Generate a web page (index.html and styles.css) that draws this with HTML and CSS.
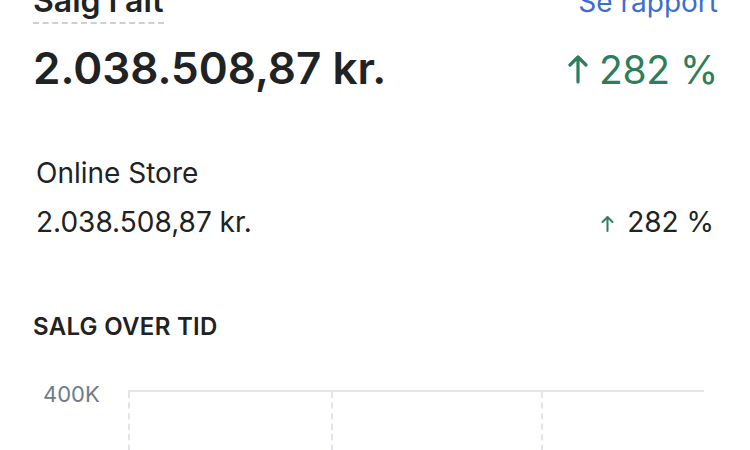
FILE: index.html
```html
<!DOCTYPE html>
<html lang="da">
<head>
    <meta charset="UTF-8">
    <meta name="viewport" content="width=device-width, initial-scale=1.0">
    <title>Salg i alt</title>
    <link rel="stylesheet" href="styles.css">
</head>
<body>
    <div class="page">
        <div class="summary">
            <div class="summary-head">
                <span class="summary-title">Salg i alt</span>
                <a class="report-link" href="#">Se rapport</a>
            </div>
            <div class="summary-values">
                <span class="total">2.038.508,87 kr.</span>
                <span class="change-big">
                    <svg class="arrow" viewBox="0 0 20 30" width="20" height="30">
                        <path d="M10 28V3M2 11l8-8 8 8" fill="none" stroke="currentColor" stroke-width="3.2" stroke-linecap="round" stroke-linejoin="round"/>
                    </svg>282 %</span>
            </div>
        </div>

        <div class="channel">
            <div class="channel-name">Online Store</div>
            <div class="channel-row">
                <span>2.038.508,87 kr.</span>
                <span class="channel-change">
                    <svg class="arrow-small" viewBox="0 0 13 17" width="13" height="17">
                        <path d="M6.5 16V2M1.5 7l5-5 5 5" fill="none" stroke="currentColor" stroke-width="2" stroke-linecap="round" stroke-linejoin="round"/>
                    </svg>282 %</span>
            </div>
        </div>

        <div class="chart-section">
            <h3 class="chart-title">SALG OVER TID</h3>
            <div class="chart">
                <div class="y-label">400K</div>
                <div class="plot">
                    <div class="plot-col"></div>
                    <div class="plot-col"></div>
                    <div class="plot-col"></div>
                </div>
            </div>
        </div>
    </div>
</body>
</html>
```

FILE: styles.css
```css
:root {
    --text-color: #202223;
    --muted-color: #6d7b8a;
    --link-color: #3b6ed3;
    --green: #2e7d5b;
    --grid-color: #e1e4e8;
}

body {
    margin: 0;
    padding: 0;
    font-family: Inter, "Noto Sans", sans-serif;
    color: var(--text-color);
    background: #fff;
    overflow: hidden;
}

.page {
    padding: 0 32px 0 33px;
    margin-top: -19px;
}

.summary-head {
    display: flex;
    justify-content: space-between;
    align-items: baseline;
    line-height: 40px;
}

.summary-title {
    font-size: 32px;
    font-weight: 600;
    padding-bottom: 1px;
    border-bottom: 2px dashed #c9d0d8;
}

.report-link {
    font-size: 28px;
    color: var(--link-color);
    text-decoration: none;
}

.summary-values {
    display: flex;
    justify-content: space-between;
    align-items: baseline;
    margin-top: 18px;
    line-height: 52px;
    height: 52px;
}

.total {
    font-size: 44px;
    font-weight: 600;
}

.change-big {
    font-size: 39px;
    letter-spacing: -0.4px;
    color: var(--green);
}

.arrow {
    vertical-align: baseline;
    margin-right: 11px;
}

.channel {
    margin-top: 62px;
    padding: 0 4px 0 3px;
    font-size: 28px;
    line-height: 34px;
}

.channel-row {
    display: flex;
    justify-content: space-between;
    align-items: baseline;
    margin-top: 15px;
}

.arrow-small {
    color: var(--green);
    vertical-align: baseline;
    margin-right: 13px;
}

.chart-section {
    margin-top: 73px;
}

.chart-title {
    margin: 0;
    font-size: 24px;
    font-weight: 600;
    line-height: 30px;
    letter-spacing: 0.3px;
}

.chart {
    display: flex;
    margin-top: 48px;
}

.y-label {
    width: 95px;
    padding-left: 10px;
    box-sizing: border-box;
    font-size: 22px;
    line-height: 26px;
    color: var(--muted-color);
    margin-top: -9px;
}

.plot {
    display: grid;
    grid-template-columns: 203px 210px 1fr;
    width: 576px;
    height: 80px;
    border-top: 2px solid var(--grid-color);
}

.plot-col {
    border-left: 2px dashed var(--grid-color);
}
```
